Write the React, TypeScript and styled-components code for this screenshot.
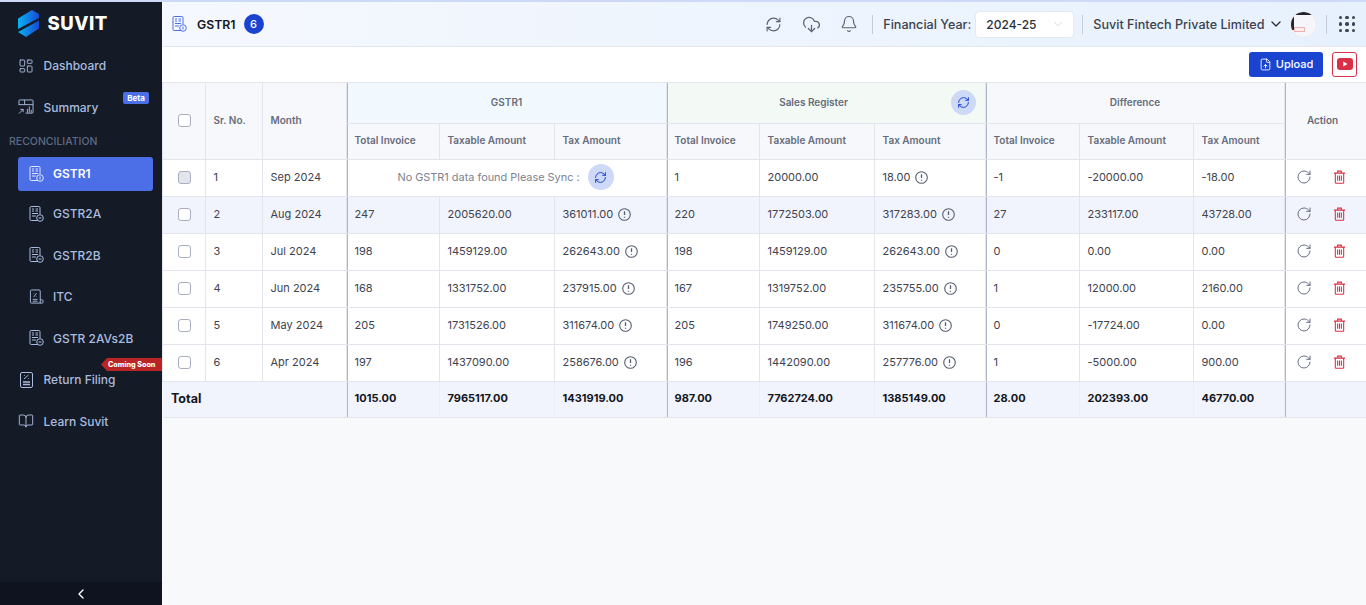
import React from "react";
import styled, { createGlobalStyle } from "styled-components";
import { RefreshCw, CloudDownload, Bell, ChevronDown, ChevronLeft, RotateCw, LayoutDashboard, BookOpen, FileUp } from "lucide-react";

const Global = createGlobalStyle`
  html, body { margin: 0; padding: 0; height: 100%; overflow: hidden; background: #f8f9fb; }
  * { box-sizing: border-box; }
  body { font-family: Inter, "Liberation Sans", sans-serif; }
`;

const Page = styled.div`
  width: 1366px; height: 605px; display: flex; flex-direction: column; background: #f8f9fb; overflow: hidden;
`;
const TopStrip = styled.div`height: 2px; background: #cdd9f6; flex: none;`;
const Body = styled.div`flex: 1; display: flex; min-height: 0;`;

const Sidebar = styled.aside`
  width: 162px; flex: none; background: #151a27; display: flex; flex-direction: column; position: relative;
`;
const Brand = styled.div`
  height: 43px; display: flex; align-items: center; gap: 7.5px; padding: 0 0 1px 18px; flex: none;
`;
const BrandName = styled.span`
  color: #fff; font-weight: 800; font-size: 18.5px; letter-spacing: 0.5px; line-height: 1;
`;
const Nav = styled.nav`flex: 1; display: flex; flex-direction: column;`;
const NavItem = styled.div<{ $sub?: boolean }>`
  position: relative; height: 41.5px; display: flex; align-items: center; flex: none; gap: 9.5px;
  padding-left: ${p => (p.$sub ? "28.5px" : "18px")};
  color: #a9bcdf; font-size: 12px; font-weight: 500;
`;
const IconBox = styled.span<{ $w?: number }>`
  width: ${p => p.$w ?? 16}px; height: 16px; display: flex; align-items: center; justify-content: center; flex: none;
`;
const ActiveItem = styled.div`
  margin: 7px 9px 2px 18px; height: 34px; border-radius: 3px; background: #4c6fe7; display: flex; align-items: center;
  gap: 9.5px; padding: 0 0 1px 10.5px; color: #fff; font-size: 12px; font-weight: 600; flex: none;
`;
const SectionLabel = styled.div`
  height: 16px; padding-left: 9px; margin-top: 6px; color: #5d6b85; font-size: 10.5px; font-weight: 500; line-height: 16px; flex: none;
`;
const Beta = styled.span`
  position: absolute; right: 13px; top: 5px; height: 12px; width: 26px; background: #4c6fe7; color: #fff; font-size: 8px;
  font-weight: 700; border-radius: 2px; text-align: center; line-height: 12px;
`;
const Ribbon = styled.span`
  position: absolute; right: 0; top: -1px; height: 13px; width: 61px; background: #b92525; color: #fff; font-size: 7.2px;
  font-weight: 800; line-height: 13px; padding-left: 7px; white-space: nowrap;
  clip-path: polygon(6px 0, 100% 0, 100% 100%, 6px 100%, 0 50%);
`;
const Collapse = styled.div`
  height: 23px; flex: none; background: #0f131f; display: flex; align-items: center; justify-content: center; color: #fff;
`;

const Main = styled.main`flex: 1; min-width: 0; display: flex; flex-direction: column;`;
const Header = styled.header`
  height: 45px; flex: none; display: flex; align-items: center; padding: 0 11px 0 10px;
  background: linear-gradient(90deg, #f5f8fe 0%, #e7f1fd 100%); border-bottom: 1px solid #e3e6ec;
`;
const HeaderTitle = styled.span`
  font-size: 12.3px; font-weight: 600; color: #14171f; margin-left: 10px;
`;
const CountBadge = styled.span`
  width: 20px; height: 20px; margin-left: 8px; border-radius: 50%; background: #1a44cf; color: #fff; font-size: 11px; font-weight: 500;
  display: flex; align-items: center; justify-content: center;
`;
const Spacer = styled.div`flex: 1;`;
const IconSlot = styled.span`
  width: 38px; display: flex; justify-content: center; align-items: center; color: #5b6478;
`;
const VRule = styled.span<{ $ml: number; $mr: number }>`
  width: 1px; height: 19px; background: #c5ccd8; margin: 0 ${p => p.$mr}px 0 ${p => p.$ml}px;
`;
const FyLabel = styled.span`font-size: 12.6px; font-weight: 500; color: #3b4250;`;
const FySelect = styled.div`
  width: 99px; height: 27px; margin-left: 4px; background: #fff; border: 1px solid #e6e9ef; border-radius: 4px;
  display: flex; align-items: center; justify-content: space-between; padding: 0 8px 0 10px; font-size: 12px; font-weight: 500; color: #2a2f3a;
  svg { color: #b7bdc9; }
`;
const Company = styled.div`
  display: flex; align-items: center; gap: 3px; font-size: 12.6px; font-weight: 500; color: #3b4250; white-space: nowrap;
  svg { color: #2a2f3a; }
`;
const Avatar = styled.div`
  width: 27px; height: 27px; margin-left: 6px; border-radius: 50%; border: 1px solid #e8eaef;
  background: #f6f6fa; position: relative; overflow: hidden;
  &::before { content: ""; position: absolute; left: 0; top: 0; width: 100%; height: 3px; background: #22252c; border-radius: 50% 50% 0 0; }
  &::after { content: ""; position: absolute; left: 0; top: 4px; width: 3px; height: 14px; background: #22252c; }
`;
const AvatarTag = styled.span`
  position: absolute; left: 3px; top: 15px; width: 11px; height: 5px; border: 1px solid #eab4b4; background: #fbeeee; z-index: 1;
`;
const Dots = styled.div`
  display: grid; grid-template-columns: repeat(3, 3.5px); gap: 3px; margin-left: 1px;
  span { width: 3.5px; height: 3.5px; border-radius: 50%; background: #3b4250; }
`;

const Toolbar = styled.div`
  height: 35px; flex: none; background: #fff; display: flex; align-items: center; justify-content: flex-end; gap: 9px; padding: 0 9px 1px 0;
`;
const UploadBtn = styled.button`
  height: 25px; width: 74px; border: 0; border-radius: 3px; background: #1a44cf; color: #fff; font: 500 11px Inter, sans-serif;
  display: flex; align-items: center; justify-content: center; gap: 4px; padding: 0;
`;
const VideoBtn = styled.button`
  width: 25px; height: 25px; background: #fff; border: 1px solid #d9304a; border-radius: 3px; display: flex;
  align-items: center; justify-content: center; padding: 0;
`;

const sepLine = "box-shadow: inset 1px 0 0 #aeb5c7;";

const Table = styled.table`
  width: 1204px; table-layout: fixed; border-collapse: collapse; font-size: 11px; flex: none;
`;
const Th = styled.th<{ $bg?: string; $sep?: boolean; $h?: number }>`
  height: ${p => p.$h ?? 36}px; padding: 0 0 3px 7.5px; text-align: left; font-size: 10px; font-weight: 600; color: #666c7b;
  background: ${p => p.$bg ?? "#f7f8fb"}; border: 1px solid #e3e5ec;
  ${p => (p.$sep ? sepLine : "")}
  position: relative;
`;
const GroupTh = styled(Th)<{ $pr?: number }>`text-align: center; padding: 0 ${p => p.$pr ?? 0}px 2px 0;`;
const Td = styled.td<{ $sep?: boolean; $zebra?: boolean }>`
  height: 37px; padding: 0 0 2px 7.5px; font-size: 11px; font-weight: 400; color: #3d4350; border: 1px solid #e3e5ec;
  background: ${p => (p.$zebra ? "#f1f4fc" : "#fff")}; white-space: nowrap;
  ${p => (p.$sep ? sepLine : "")}
`;
const CenterTd = styled(Td)`padding: 0 0 2px; text-align: center;`;
const TotalTd = styled.td<{ $sep?: boolean }>`
  height: 36px; padding: 0 0 4px 7.5px; font-size: 11px; font-weight: 700; color: #14171f; background: #f1f4fc;
  border-top: 1px solid #e3e5ec; border-bottom: 1px solid #e3e5ec; border-right: 1px solid #eceef5;
  ${p => (p.$sep ? sepLine : "")}
`;
const TotalLabel = styled(TotalTd)`font-size: 12.5px; padding: 0 0 2px 8.5px;`;
const Cell = styled.span`display: inline-flex; align-items: center; gap: 5px;`;
const Box = styled.span<{ $off?: boolean }>`
  display: inline-block; width: 13px; height: 13px; border-radius: 3px; border: 1px solid #a9afc0; vertical-align: middle;
  background: ${p => (p.$off ? "#e3e5ec" : "#fff")};
`;
const SyncBtn = styled.span`
  width: 26px; height: 26px; border-radius: 50%; background: #cdd9f6; color: #1a44cf; display: inline-flex; align-items: center; justify-content: center;
`;
const HeaderSync = styled(SyncBtn)`position: absolute; right: 9px; top: 7px; width: 25px; height: 25px;`;
const EmptyMsg = styled.span`
  display: inline-flex; align-items: center; gap: 8px; color: #7c8292; font-size: 10.9px; margin-right: 2px;
`;
const Actions = styled.div`display: flex; align-items: center; gap: 20.5px; padding-left: 3.5px;`;
const Turn = styled.span`color: #5b6478; display: flex;`;

/* ---- drawings ---- */
const Logo = () => (
  <svg width="22" height="27" viewBox="0 0 22 27">
    <defs>
      <linearGradient id="lg" x1="0" y1="0" x2="22" y2="0" gradientUnits="userSpaceOnUse">
        <stop offset="0" stopColor="#08b4f5" /><stop offset="1" stopColor="#1a44cf" />
      </linearGradient>
    </defs>
    <path d="M0 8.500 L14 0 L21 4 V8 L0 19 Z" fill="url(#lg)" />
    <path d="M21 10.500 V18.500 L8 27 L0 22 Z" fill="url(#lg)" />
  </svg>
);
const Gst = ({ c = "#a9bcdf", mark = "1" }: { c?: string; mark?: string }) => (
  <svg width="15" height="16" viewBox="0 0 15 16" fill="none" stroke={c} strokeWidth="1">
    <path d="M9 14.500H2.200A1.200 1.200 0 0 1 1 13.300V1.700A1.200 1.200 0 0 1 2.200.5h7.600A1.200 1.200 0 0 1 11 1.700V8" />
    <path d="M3 3h2M6.500 3h2.500M3 5h2M6.500 5h2.500M3 7.500h6M3 10h4" />
    <circle cx="11" cy="12" r="3.300" />
    {mark === "1" ? <path d="M11 10.500v3" /> : <path d="M9.500 12h3" />}
  </svg>
);
const Itc = () => (
  <svg width="16" height="16" viewBox="0 0 16 16" fill="none" stroke="#a9bcdf" strokeWidth="1">
    <path d="M12 11V1.700A1.200 1.200 0 0 0 10.800.5H2.700A1.200 1.200 0 0 0 1.500 1.700V13.300a1.200 1.200 0 0 0 1.200 1.200H14a1 1 0 0 0 1-1V12a1 1 0 0 0-1-1h-2v3.500" />
    <path d="M5 8l3-4M5 4.500h.5M7.500 7.500H8M4 10.500h5M4 12.500h5" />
  </svg>
);
const SummaryIcon = () => (
  <svg width="17" height="16" viewBox="0 0 17 16" fill="none" stroke="#a9bcdf" strokeWidth="1">
    <path d="M1 6V1.500A1 1 0 0 1 2 .5h13a1 1 0 0 1 1 1v12a1 1 0 0 1-1 1H8" />
    <path d="M1 5.500h15M7 .5v5" />
    <path d="M1 15l4.500-4.500M2.500 10.500h3v3" />
    <path d="M10 14v-4M12 14V7.500M14 14v-3" />
  </svg>
);
const ReturnIcon = () => (
  <svg width="13" height="16" viewBox="0 0 13 16" fill="none" stroke="#a9bcdf" strokeWidth="1">
    <rect x=".5" y=".5" width="12" height="15" rx="1.500" />
    <path d="M4 7l4.500-4M4 3.500h.7M8 6.500h.7" />
    <path d="M3 10h7M3 12.500h7" strokeWidth="1.500" />
  </svg>
);
const Info = () => (
  <svg width="13" height="13" viewBox="0 0 13 13" fill="none" stroke="#565e6e" strokeWidth="1.100">
    <circle cx="6.500" cy="6.500" r="5.800" />
    <path d="M6.500 3.300v3.800M6.500 8.700v1" strokeWidth="1.300" />
  </svg>
);
const TrashIcon = () => (
  <svg width="13" height="14" viewBox="0 0 14 15" fill="none" stroke="#dc2f45" strokeWidth="1.150">
    <path d="M1 3.300h12M5 3.300V1.200h4v2.100" />
    <path d="M2.500 3.300v10a1 1 0 0 0 1 1h7a1 1 0 0 0 1-1v-10" />
    <path d="M5 6v5.500M7 6v5.500M9 6v5.500" />
  </svg>
);
const VideoGlyph = () => (
  <svg width="16" height="12" viewBox="0 0 16 12">
    <rect width="16" height="12" rx="3" fill="#d9304a" />
    <path d="M6.300 3.500 10.500 6 6.300 8.500Z" fill="#fff" />
  </svg>
);

type Row = { n: number; m: string; a: (string | null)[]; b: string[]; d: string[]; off?: boolean };
const rows: Row[] = [
  { n: 1, m: "Sep 2024", a: [null, null, null], b: ["1", "20000.00", "18.00"], d: ["-1", "-20000.00", "-18.00"], off: true },
  { n: 2, m: "Aug 2024", a: ["247", "2005620.00", "361011.00"], b: ["220", "1772503.00", "317283.00"], d: ["27", "233117.00", "43728.00"] },
  { n: 3, m: "Jul 2024", a: ["198", "1459129.00", "262643.00"], b: ["198", "1459129.00", "262643.00"], d: ["0", "0.00", "0.00"] },
  { n: 4, m: "Jun 2024", a: ["168", "1331752.00", "237915.00"], b: ["167", "1319752.00", "235755.00"], d: ["1", "12000.00", "2160.00"] },
  { n: 5, m: "May 2024", a: ["205", "1731526.00", "311674.00"], b: ["205", "1749250.00", "311674.00"], d: ["0", "-17724.00", "0.00"] },
  { n: 6, m: "Apr 2024", a: ["197", "1437090.00", "258676.00"], b: ["196", "1442090.00", "257776.00"], d: ["1", "-5000.00", "900.00"] },
];
const widths = [43, 57, 84, 93, 115, 112, 93, 115, 111, 94, 114, 91, 82];
const subHeads = ["Total Invoice", "Taxable Amount", "Tax Amount"];

export default function App() {
  return (
    <Page>
      <Global />
      <TopStrip />
      <Body>
        <Sidebar>
          <Brand><Logo /><BrandName>SUVIT</BrandName></Brand>
          <Nav>
            <NavItem><IconBox><LayoutDashboard size={20} strokeWidth={1.4} /></IconBox>Dashboard</NavItem>
            <NavItem><IconBox><SummaryIcon /></IconBox><span>Summary</span><Beta>Beta</Beta></NavItem>
            <SectionLabel>RECONCILIATION</SectionLabel>
            <ActiveItem><IconBox $w={15}><Gst c="#dfe7fb" /></IconBox>GSTR1</ActiveItem>
            <NavItem $sub><IconBox $w={15}><Gst mark="2" /></IconBox>GSTR2A</NavItem>
            <NavItem $sub><IconBox $w={15}><Gst mark="2" /></IconBox>GSTR2B</NavItem>
            <NavItem $sub><IconBox $w={15}><Itc /></IconBox>ITC</NavItem>
            <NavItem $sub><IconBox $w={15}><Gst mark="2" /></IconBox>GSTR 2AVs2B</NavItem>
            <NavItem><IconBox><ReturnIcon /></IconBox>Return Filing<Ribbon>Coming Soon</Ribbon></NavItem>
            <NavItem><IconBox><BookOpen size={18} strokeWidth={1.4} /></IconBox>Learn Suvit</NavItem>
          </Nav>
          <Collapse><ChevronLeft size={16} strokeWidth={2} /></Collapse>
        </Sidebar>
        <Main>
          <Header>
            <Gst c="#4c6fe7" />
            <HeaderTitle>GSTR1</HeaderTitle>
            <CountBadge>6</CountBadge>
            <Spacer />
            <IconSlot><RefreshCw size={17} strokeWidth={1.6} /></IconSlot>
            <IconSlot><CloudDownload size={19} strokeWidth={1.6} /></IconSlot>
            <IconSlot><Bell size={18} strokeWidth={1.6} /></IconSlot>
            <VRule $ml={4} $mr={10} />
            <FyLabel>Financial Year:</FyLabel>
            <FySelect>2024-25<ChevronDown size={14} strokeWidth={1} /></FySelect>
            <VRule $ml={8} $mr={10} />
            <Company>Suvit Fintech Private Limited<ChevronDown size={16} strokeWidth={2} /></Company>
            <Avatar><AvatarTag /></Avatar>
            <VRule $ml={9} $mr={11} />
            <Dots>{Array.from({ length: 9 }).map((_, i) => <span key={i} />)}</Dots>
          </Header>
          <Toolbar>
            <UploadBtn><FileUp size={13} strokeWidth={1.6} />Upload</UploadBtn>
            <VideoBtn><VideoGlyph /></VideoBtn>
          </Toolbar>
          <Table>
            <colgroup>{widths.map((w, i) => <col key={i} style={{ width: w }} />)}</colgroup>
            <thead>
              <tr>
                <GroupTh rowSpan={2}><Box /></GroupTh>
                <Th rowSpan={2}>Sr. No.</Th>
                <Th rowSpan={2}>Month</Th>
                <GroupTh colSpan={3} $sep $bg="#f1f9fe" $h={41}>GSTR1</GroupTh>
                <GroupTh colSpan={3} $sep $bg="#f3faf5" $h={41} $pr={25}>Sales Register<HeaderSync><RefreshCw size={13} strokeWidth={1.8} /></HeaderSync></GroupTh>
                <GroupTh colSpan={3} $sep $h={41}>Difference</GroupTh>
                <GroupTh rowSpan={2} $sep $pr={6}>Action</GroupTh>
              </tr>
              <tr>
                {[0, 1, 2].flatMap(g => subHeads.map((s, i) => <Th key={`${g}${i}`} $sep={i === 0}>{s}</Th>))}
              </tr>
            </thead>
            <tbody>
              {rows.map((r, idx) => {
                const z = idx === 1;
                return (
                  <tr key={r.n}>
                    <CenterTd $zebra={z}><Box $off={r.off} /></CenterTd>
                    <Td $zebra={z}>{r.n}</Td>
                    <Td $zebra={z}>{r.m}</Td>
                    {r.a[0] === null ? (
                      <CenterTd colSpan={3} $sep $zebra={z}>
                        <EmptyMsg>No GSTR1 data found Please Sync :<SyncBtn><RefreshCw size={13} strokeWidth={1.8} /></SyncBtn></EmptyMsg>
                      </CenterTd>
                    ) : (
                      <>
                        <Td $sep $zebra={z}>{r.a[0]}</Td>
                        <Td $zebra={z}>{r.a[1]}</Td>
                        <Td $zebra={z}><Cell>{r.a[2]}<Info /></Cell></Td>
                      </>
                    )}
                    <Td $sep $zebra={z}>{r.b[0]}</Td>
                    <Td $zebra={z}>{r.b[1]}</Td>
                    <Td $zebra={z}><Cell>{r.b[2]}<Info /></Cell></Td>
                    <Td $sep $zebra={z}>{r.d[0]}</Td>
                    <Td $zebra={z}>{r.d[1]}</Td>
                    <Td $zebra={z}>{r.d[2]}</Td>
                    <Td $sep $zebra={z}>
                      <Actions>
                        <Turn><RotateCw size={16} strokeWidth={1.4} /></Turn>
                        <TrashIcon />
                      </Actions>
                    </Td>
                  </tr>
                );
              })}
              <tr>
                <TotalLabel colSpan={3}>Total</TotalLabel>
                <TotalTd $sep>1015.00</TotalTd>
                <TotalTd>7965117.00</TotalTd>
                <TotalTd>1431919.00</TotalTd>
                <TotalTd $sep>987.00</TotalTd>
                <TotalTd>7762724.00</TotalTd>
                <TotalTd>1385149.00</TotalTd>
                <TotalTd $sep>28.00</TotalTd>
                <TotalTd>202393.00</TotalTd>
                <TotalTd>46770.00</TotalTd>
                <TotalTd $sep />
              </tr>
            </tbody>
          </Table>
        </Main>
      </Body>
    </Page>
  );
}
